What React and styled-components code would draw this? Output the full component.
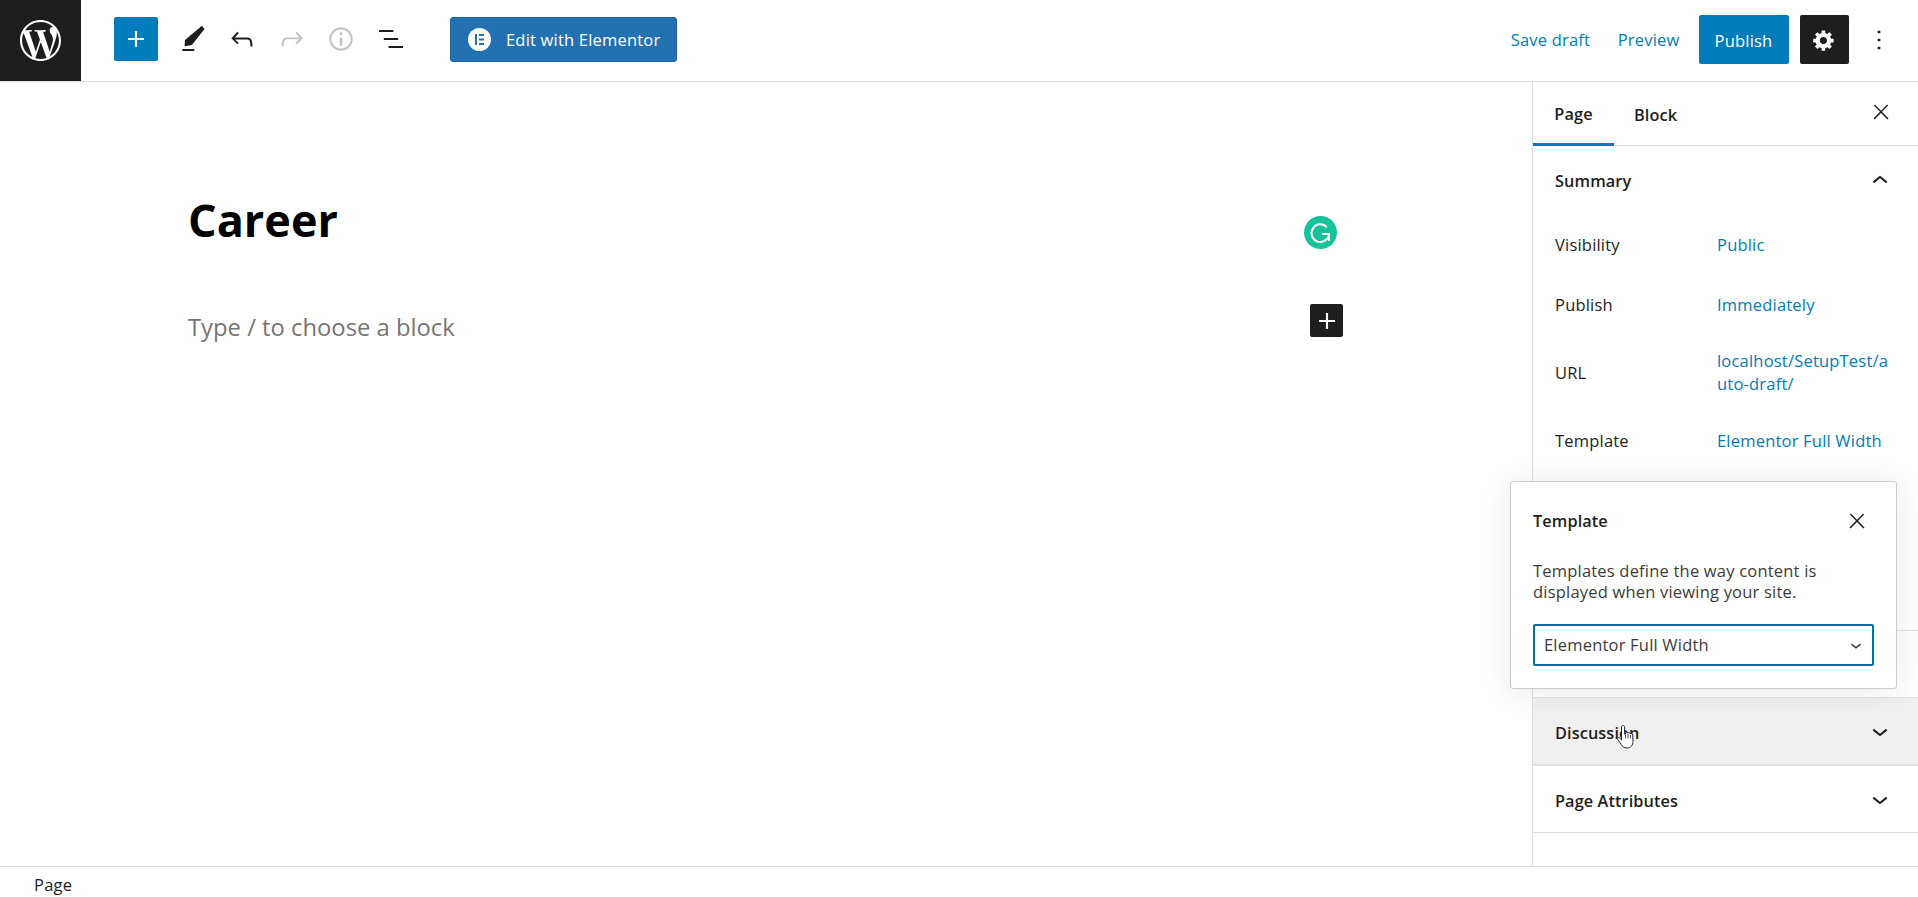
import React from 'react';
import styled, { createGlobalStyle } from 'styled-components';
import { SiWordpress } from 'react-icons/si';

const GlobalStyle = createGlobalStyle`
  html, body { margin: 0; padding: 0; height: 100%; overflow: hidden; background: #fff; }
  body { font-family: "Open Sans", "Noto Sans", sans-serif; color: #1e1e1e; font-size: 16.5px; letter-spacing: 0.2px; }
  #root { height: 100%; }
  * { box-sizing: border-box; }
`;

const Page = styled.div`
  height: 897px;
  display: flex;
  flex-direction: column;
`;

const Header = styled.header`
  height: 82px;
  flex: none;
  display: flex;
  align-items: center;
  border-bottom: 1px solid #e0e0e0;
`;

const LogoBox = styled.div`
  width: 81px;
  height: 81px;
  flex: none;
  background: #1e1e1e;
  color: #fff;
  display: flex;
  align-items: center;
  justify-content: center;
`;

const Inserter = styled.button`
  width: 44px;
  height: 44px;
  margin: 0 10px 3px 33px;
  border: 0;
  padding: 0;
  border-radius: 2px;
  background: #007cba;
  color: #fff;
  display: flex;
  align-items: center;
  justify-content: center;
`;

const ToolButton = styled.button`
  width: 49.5px;
  height: 44px;
  margin-bottom: 3px;
  border: 0;
  padding: 0;
  background: none;
  color: ${(p) => (p.$disabled ? '#c4c4c4' : '#1e1e1e')};
  display: flex;
  align-items: center;
  justify-content: center;
`;

const ElementorButton = styled.button`
  width: 227px;
  height: 45px;
  margin: 0 0 3px 34.5px;
  padding: 1px 0 0 17px;
  border: 1px solid #1d64a0;
  border-radius: 3px;
  background: #2271b1;
  color: #fff;
  font: inherit;
  letter-spacing: inherit;
  display: flex;
  align-items: center;
  gap: 15px;
`;

const ElementorMark = styled.span`
  width: 23px;
  height: 23px;
  flex: none;
  border-radius: 50%;
  background: #fff;
  display: flex;
  align-items: center;
  justify-content: center;
`;

const HeaderRight = styled.div`
  margin-left: auto;
  margin-bottom: 2px;
  padding-right: 14.500px;
  display: flex;
  align-items: center;
`;

const TextLink = styled.a`
  color: #007cba;
  margin-right: ${(p) => p.$gap}px;
`;

const PublishButton = styled.button`
  width: 90px;
  height: 49px;
  border: 0;
  padding: 1px 0 0;
  border-radius: 2px;
  background: #007cba;
  color: #fff;
  font: inherit;
  letter-spacing: inherit;
`;

const SettingsButton = styled.button`
  width: 49px;
  height: 49px;
  margin-left: 11px;
  border: 0;
  padding: 0;
  border-radius: 2px;
  background: #1e1e1e;
  color: #fff;
  display: flex;
  align-items: center;
  justify-content: center;
`;

const MoreButton = styled.button`
  width: 49px;
  height: 49px;
  margin-left: 6px;
  border: 0;
  padding: 0;
  background: none;
  color: #1e1e1e;
  display: flex;
  align-items: center;
  justify-content: center;
`;

const Body = styled.div`
  flex: 1;
  min-height: 0;
  display: flex;
`;

const Editor = styled.main`
  flex: 1;
  min-width: 0;
  padding: 108px 189px 0 188px;
`;

const TitleRow = styled.div`
  display: flex;
  align-items: flex-start;
  justify-content: space-between;
`;

const Title = styled.h1`
  margin: 0;
  font-size: 45px;
  line-height: 60px;
  font-weight: 700;
  letter-spacing: 0;
  color: #000;
`;

const GrammarlyBadge = styled.div`
  width: 33px;
  height: 33px;
  margin: 26px 6px 0 0;
  border-radius: 50%;
  background: #15c39a;
  display: flex;
  align-items: center;
  justify-content: center;
`;

const BlockRow = styled.div`
  margin-top: 54px;
  display: flex;
  align-items: flex-start;
  justify-content: space-between;
`;

const Placeholder = styled.p`
  margin: 8px 0 0;
  font-size: 23.800px;
  line-height: 30px;
  letter-spacing: 0;
  color: #757575;
`;

const BlockAdd = styled.button`
  width: 33px;
  height: 33px;
  border: 0;
  padding: 0;
  border-radius: 2px;
  background: #1e1e1e;
  color: #fff;
  display: flex;
  align-items: center;
  justify-content: center;
`;

const Sidebar = styled.aside`
  width: 386px;
  flex: none;
  border-left: 1px solid #e0e0e0;
  display: flex;
  flex-direction: column;
  position: relative;
`;

const Tabs = styled.div`
  height: 64px;
  flex: none;
  display: flex;
  align-items: stretch;
  border-bottom: 1px solid #e0e0e0;
`;

const Tab = styled.div`
  width: ${(p) => p.$width}px;
  height: 64px;
  display: flex;
  align-items: center;
  justify-content: center;
  font-size: 16.300px;
  font-weight: 600;
  letter-spacing: 0.1px;
  color: #1e1e1e;
  border-bottom: ${(p) => (p.$active ? '3px solid #007cba' : '0')};
  padding-top: ${(p) => (p.$active ? '3px' : '1px')};
`;

const TabClose = styled.div`
  margin-left: auto;
  width: 49px;
  margin-right: 13px;
  display: flex;
  align-items: center;
  justify-content: center;
  padding-bottom: 4px;
`;

const PanelHead = styled.div`
  height: ${(p) => p.$height || 67}px;
  padding: 0 22px;
  display: flex;
  align-items: center;
  justify-content: space-between;
  font-size: 16.300px;
  font-weight: 600;
  letter-spacing: 0.1px;
  color: #1e1e1e;
  background: ${(p) => (p.$hover ? '#f0f0f0' : 'transparent')};
  border-bottom: ${(p) => (p.$hover ? '2px' : '1px')} solid #e0e0e0;
`;

const PanelTitle = styled.span`
  padding-top: 3px;
`;

const SummaryPanel = styled.section`
  height: 485px;
  flex: none;
  border-bottom: 1px solid #e0e0e0;
`;

const SummaryHead = styled.div`
  height: 69px;
  padding: 0 22px;
  display: flex;
  align-items: center;
  justify-content: space-between;
  font-size: 16.300px;
  font-weight: 600;
  letter-spacing: 0.1px;
`;

const Rows = styled.div`
  padding: 14px 0 0 22px;
  display: flex;
  flex-direction: column;
  gap: 30px;
`;

const Row = styled.div`
  min-height: 30px;
  display: flex;
  align-items: center;
`;

const RowLabel = styled.div`
  width: 162px;
  flex: none;
`;

const RowValue = styled.a`
  width: 174px;
  color: #007cba;
  line-height: 23px;
  overflow-wrap: anywhere;
`;

const EmptyPanel = styled.div`
  height: 67px;
  flex: none;
  border-bottom: 1px solid #e0e0e0;
`;

const Popover = styled.div`
  position: absolute;
  left: -23px;
  top: 399px;
  width: 387px;
  height: 208px;
  padding: 0 22px;
  background: #fff;
  border: 1px solid #ccc;
  border-radius: 3px;
  box-shadow: 0 3px 30px rgba(25, 30, 35, 0.1);
  display: flex;
  flex-direction: column;
  z-index: 2;
`;

const PopoverHead = styled.div`
  height: 78px;
  display: flex;
  align-items: center;
  justify-content: space-between;
  font-size: 16.300px;
  font-weight: 600;
  letter-spacing: 0.1px;
  padding-right: 5px;
`;

const PopoverText = styled.p`
  margin: 0;
  width: 300px;
  line-height: 21px;
  color: #3c3c3c;
  height: 64px;
`;

const SelectBox = styled.div`
  height: 42px;
  border: 2px solid #0071a1;
  border-radius: 2px;
  padding: 0 5px 1px 9px;
  display: flex;
  align-items: center;
  justify-content: space-between;
  color: #3c3c3c;
`;

const Cursor = styled.svg`
  position: absolute;
  left: 83px;
  top: 642px;
  z-index: 3;
`;

const Footer = styled.footer`
  height: 31px;
  flex: none;
  border-top: 1px solid #e0e0e0;
  padding: 4px 0 0 34px;
  display: flex;
  align-items: center;
  color: #1e1e1e;
`;

const Icon = ({ d, size = 32, box = 24 }) => (
  <svg width={size} height={size} viewBox={`0 0 ${box} ${box}`} fill="currentColor">
    <path d={d} />
  </svg>
);

const plus = 'M18 11.2h-5.2V6h-1.6v5.2H6v1.6h5.2V18h1.6v-5.2H18z';
const pencil = 'M4 21h9v-1.500H4zM18.700 2l1.900 2.500-9.400 12-5.500 1 .3-4.700z';
const undo = 'M18.3 11.7c-.6-.6-1.4-.9-2.3-.9H6.7l2.9-3.3-1.1-1-4.5 5L8.5 16l1-1-2.7-2.7H16c.5 0 .9.2 1.3.5 1 1 1 3.4 1 4.5v.3h1.5v-.2c0-1.5 0-4.3-1.5-5.7z';
const redo = 'M15.6 6.5l-1.1 1 2.9 3.3H8c-.9 0-1.7.3-2.3.9-1.4 1.5-1.4 4.2-1.4 5.6v.2h1.5v-.3c0-1.1 0-3.5 1-4.5.3-.3.7-.5 1.3-.5h9.2L14.5 15l1.1 1.1 4.6-4.6-4.6-5z';
const info = 'M12 3.2c-4.8 0-8.8 3.9-8.8 8.8 0 4.8 3.9 8.8 8.8 8.8 4.8 0 8.8-3.9 8.8-8.8 0-4.8-4-8.8-8.8-8.8zm0 16c-4 0-7.2-3.3-7.2-7.2C4.8 8 8 4.8 12 4.8s7.2 3.3 7.2 7.2c0 4-3.2 7.2-7.2 7.2zM11 17h2v-6h-2v6zm0-8h2V7h-2v2z';
const listView = 'M13.8 5.2H3v1.5h10.8V5.2zm-3.6 12v1.5H21v-1.5H10.2zm7.2-6H6.6v1.5h10.8v-1.5z';
const cog = 'M18 12h-2.18c-.17.7-.44 1.35-.81 1.93l1.54 1.54-2.1 2.1-1.54-1.54c-.58.36-1.23.63-1.91.79V19H8v-2.18c-.68-.16-1.33-.43-1.91-.79l-1.54 1.54-2.12-2.12 1.54-1.54c-.36-.58-.63-1.23-.79-1.91H1V9.03h2.17c.16-.7.44-1.35.8-1.94L2.43 5.55l2.1-2.1 1.54 1.54c.58-.37 1.24-.64 1.93-.81V2h3v2.18c.68.16 1.33.43 1.91.79l1.54-1.54 2.12 2.12-1.54 1.54c.36.59.64 1.24.8 1.94H18V12zm-8.5 1.5c1.66 0 3-1.34 3-3s-1.34-3-3-3-3 1.34-3 3 1.34 3 3 3z';
const more = 'M13 19h-2v-2h2v2zm0-6h-2v-2h2v2zm0-6h-2V5h2v2z';
const close = 'M13 11.8l6.1-6.3-1-1-6.1 6.2-6.1-6.2-1 1 6.1 6.3-6.5 6.7 1 1 6.5-6.6 6.5 6.6 1-1z';
const chevronUp = 'M6.5 12.4L12 8l5.5 4.4-.9 1.2L12 10l-4.5 3.6-1-1.2z';
const chevronDown = 'M17.5 11.6L12 16l-5.5-4.4.9-1.2L12 14l4.5-3.6 1 1.2z';

const summaryRows = [
  ['Visibility', 'Public'],
  ['Publish', 'Immediately'],
  ['URL', 'localhost/SetupTest/auto-draft/'],
  ['Template', 'Elementor Full Width'],
];

export default function App() {
  return (
    <Page>
      <GlobalStyle />
      <Header>
        <LogoBox>
          <SiWordpress size={41} />
        </LogoBox>
        <Inserter>
          <Icon d={plus} />
        </Inserter>
        <ToolButton><Icon d={pencil} /></ToolButton>
        <ToolButton><Icon d={undo} /></ToolButton>
        <ToolButton $disabled><Icon d={redo} /></ToolButton>
        <ToolButton $disabled><Icon d={info} /></ToolButton>
        <ToolButton><Icon d={listView} /></ToolButton>
        <ElementorButton>
          <ElementorMark>
            <svg width="13" height="13" viewBox="0 0 13 13" fill="#2271b1">
              <path d="M2 1h2v11H2zM6 1h5v2H6zM6 5.500h5v2H6zM6 10h5v2H6z" />
            </svg>
          </ElementorMark>
          Edit with Elementor
        </ElementorButton>
        <HeaderRight>
          <TextLink $gap={27.5}>Save draft</TextLink>
          <TextLink $gap={19}>Preview</TextLink>
          <PublishButton>Publish</PublishButton>
          <SettingsButton>
            <Icon d={cog} size={24} box={20} />
          </SettingsButton>
          <MoreButton>
            <Icon d={more} />
          </MoreButton>
        </HeaderRight>
      </Header>
      <Body>
        <Editor>
          <TitleRow>
            <Title>Career</Title>
            <GrammarlyBadge>
              <svg width="25" height="25" viewBox="0 0 25 25" fill="none" stroke="#fff" strokeWidth="2">
                <path d="M18.800 7.200A8.800 8.800 0 1 0 20.800 15.500" />
                <path d="M14 14h7v7" />
              </svg>
            </GrammarlyBadge>
          </TitleRow>
          <BlockRow>
            <Placeholder>Type / to choose a block</Placeholder>
            <BlockAdd>
              <Icon d={plus} />
            </BlockAdd>
          </BlockRow>
        </Editor>
        <Sidebar>
          <Tabs>
            <Tab $active $width={81}>Page</Tab>
            <Tab $width={83}>Block</Tab>
            <TabClose><Icon d={close} size={24} /></TabClose>
          </Tabs>
          <SummaryPanel>
            <SummaryHead>
              Summary
              <Icon d={chevronUp} />
            </SummaryHead>
            <Rows>
              {summaryRows.map(([label, value]) => (
                <Row key={label}>
                  <RowLabel>{label}</RowLabel>
                  <RowValue>{value}</RowValue>
                </Row>
              ))}
            </Rows>
          </SummaryPanel>
          <EmptyPanel />
          <PanelHead $hover $height={68}>
            <PanelTitle>Discussion</PanelTitle>
            <Icon d={chevronDown} />
          </PanelHead>
          <PanelHead>
            <PanelTitle>Page Attributes</PanelTitle>
            <Icon d={chevronDown} />
          </PanelHead>
          <Popover>
            <PopoverHead>
              Template
              <Icon d={close} size={24} />
            </PopoverHead>
            <PopoverText>Templates define the way content is displayed when viewing your site.</PopoverText>
            <SelectBox>
              Elementor Full Width
              <Icon d={chevronDown} size={22} />
            </SelectBox>
          </Popover>
          <Cursor width="22" height="26" viewBox="0 0 22 26">
            <path
              d="M7 1.500c1 0 1.600.700 1.600 1.700v7l.9-.1V8.800c.9-.8 2-.5 2.400.3.900-.6 2-.3 2.400.6 1-.5 2.300 0 2.400 1.300l.3 6.500c0 3.500-2.400 6.500-6 6.500-3.200 0-4.700-1.600-6-3.700L1.700 15.500c-.6-1 0-2 1-2 .6 0 1.200.4 1.600 1l1.200 1.500V3.200c0-1 .6-1.700 1.500-1.700z"
              fill="#fff"
              stroke="#1b2340"
              strokeWidth="1"
            />
            <path d="M9.500 10.500v4M12 10v4.500M14.500 11v3.500" stroke="#1b2340" strokeWidth="0.8" />
          </Cursor>
        </Sidebar>
      </Body>
      <Footer>Page</Footer>
    </Page>
  );
}
